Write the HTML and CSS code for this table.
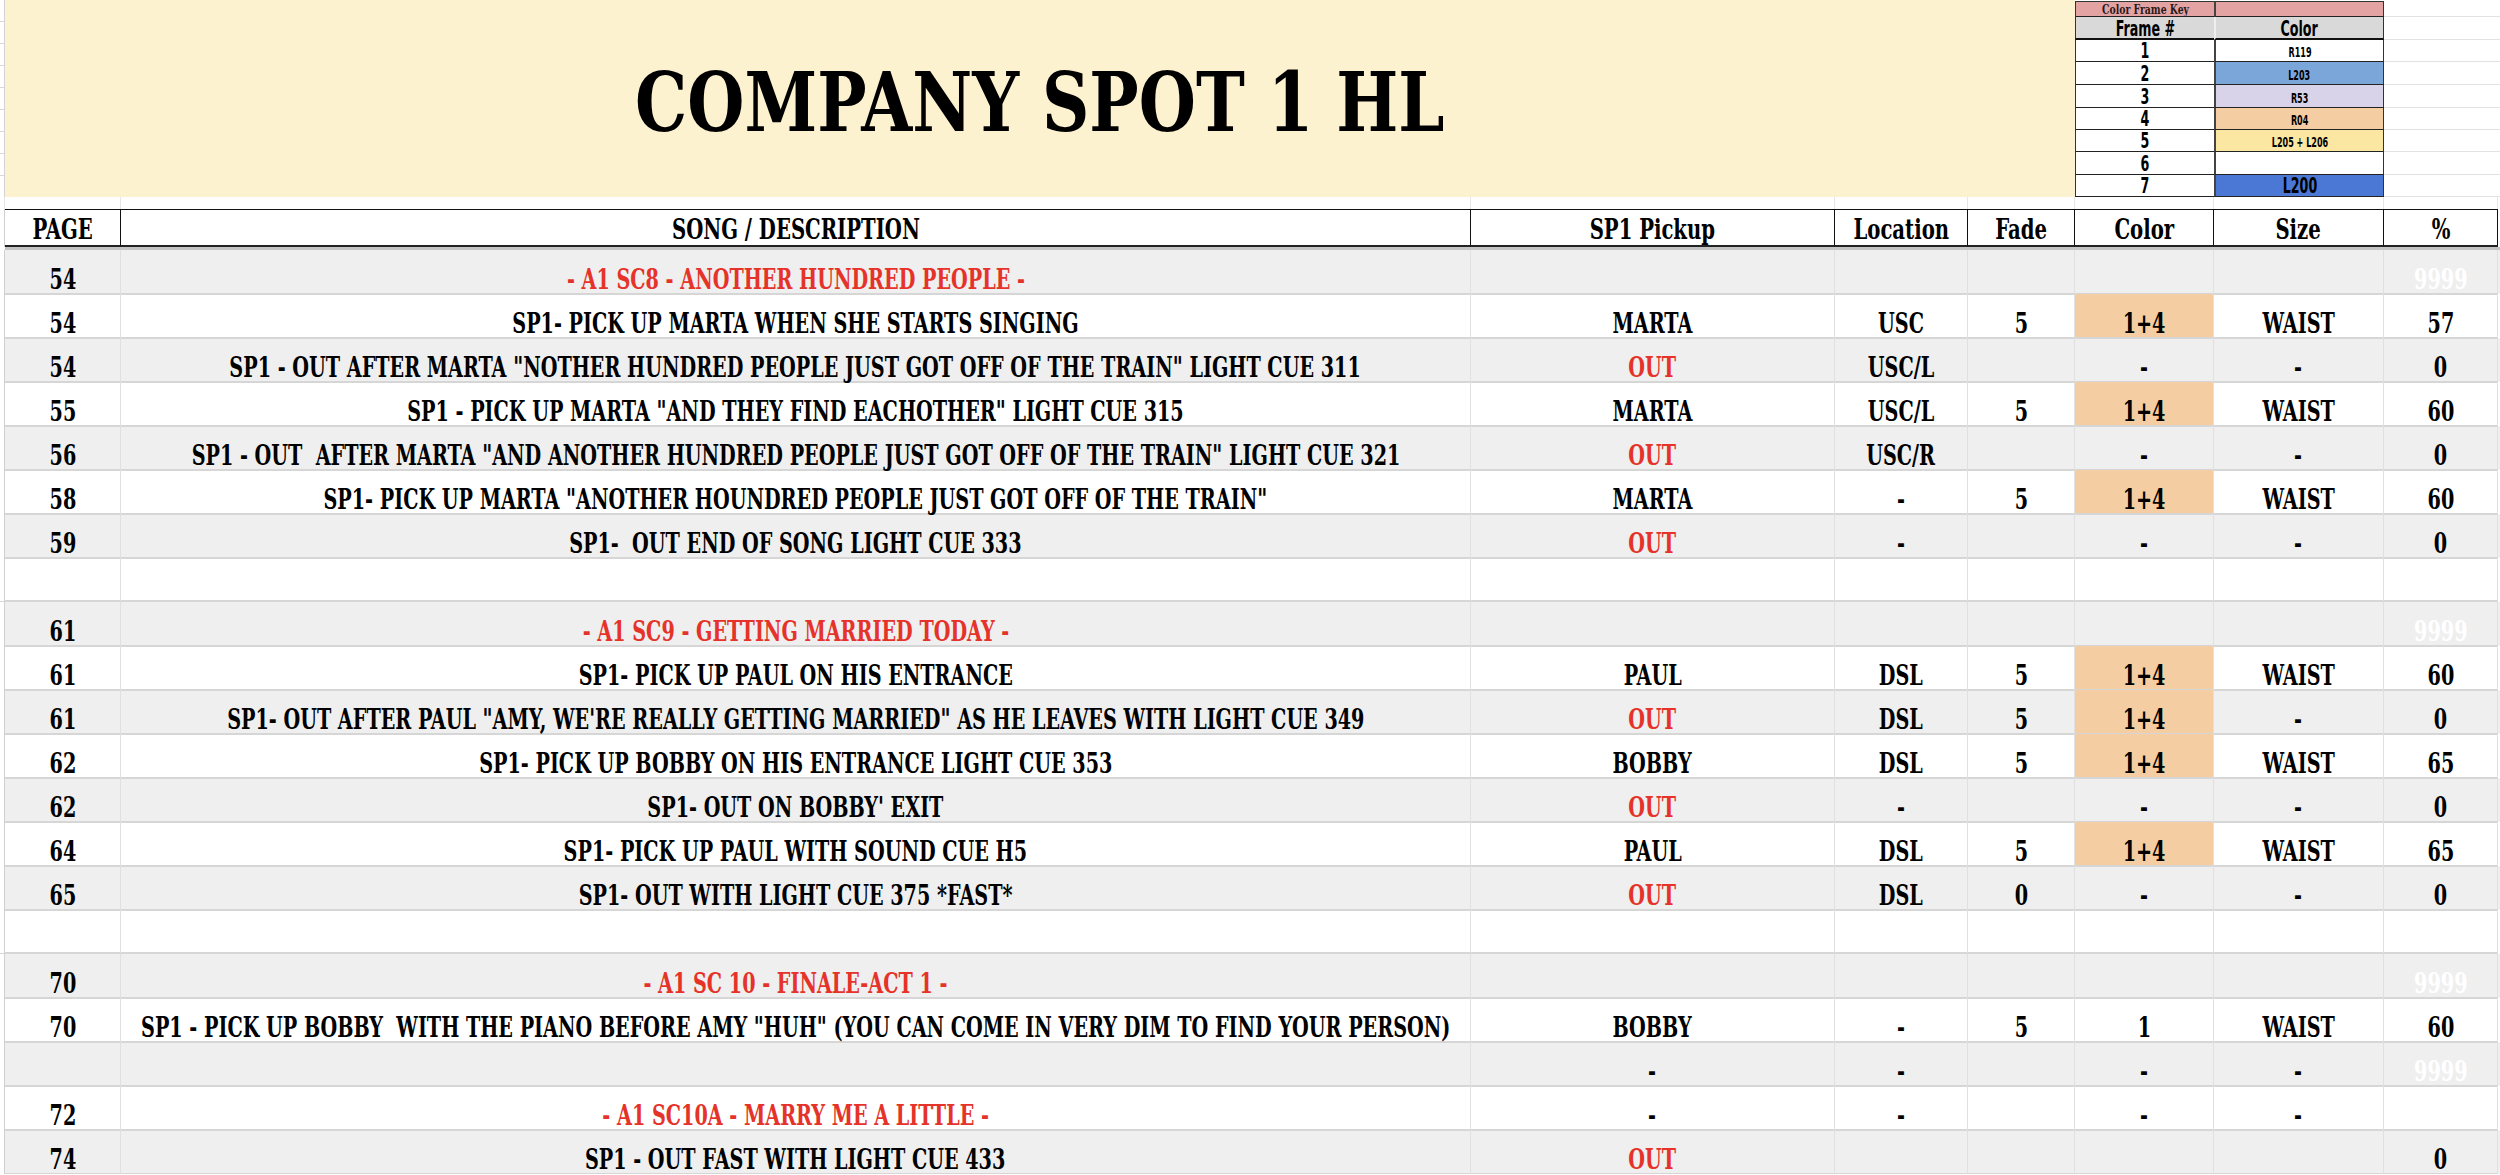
FILE: index.html
```html
<!DOCTYPE html>
<html>
<head>
<meta charset="utf-8">
<link rel="stylesheet" href="styles.css">
</head>
<body>
<div class="sheet">
  <div class="top">
    <div class="gutter"></div>
    <div class="title-cell"><h1 class="title">COMPANY SPOT 1 HL</h1></div>
    <div class="key">
      <div class="k k-title"><span class="kl">Color Frame Key</span></div><div class="k k-title"></div>
      <div class="k k-head"><span class="kt">Frame #</span></div><div class="k k-head"><span class="kt">Color</span></div>
      <div class="k k-num"><span class="kt">1</span></div><div class="k k-val"><span class="kt">R119</span></div>
      <div class="k k-num"><span class="kt">2</span></div><div class="k k-val c-l203"><span class="kt">L203</span></div>
      <div class="k k-num"><span class="kt">3</span></div><div class="k k-val c-r53"><span class="kt">R53</span></div>
      <div class="k k-num"><span class="kt">4</span></div><div class="k k-val c-r04"><span class="kt">R04</span></div>
      <div class="k k-num"><span class="kt">5</span></div><div class="k k-val c-l205"><span class="kt">L205 + L206</span></div>
      <div class="k k-num"><span class="kt">6</span></div><div class="k k-val"></div>
      <div class="k k-num"><span class="kt">7</span></div><div class="k k-val k-big c-l200"><span class="kt">L200</span></div>
    </div>
    <div class="filler">
      <div class="f"></div><div class="f"></div><div class="f"></div><div class="f"></div><div class="f"></div><div class="f"></div><div class="f"></div><div class="f"></div><div class="f"></div>
    </div>
  </div>
  <div class="row strip"><div></div><div></div><div></div><div></div><div></div><div></div><div></div><div></div><div></div></div>

  <div class="row head">
    <div></div><div><span class="t">PAGE</span></div><div><span class="t">SONG / DESCRIPTION</span></div><div><span class="t">SP1 Pickup</span></div><div><span class="t">Location</span></div><div><span class="t">Fade</span></div><div><span class="t">Color</span></div><div><span class="t">Size</span></div><div><span class="t">%</span></div>
  </div>
  <div class="freeze"></div>

  <div class="row gray"><div></div><div><span class="t">54</span></div><div class="red"><span class="t">- A1 SC8 - ANOTHER HUNDRED PEOPLE -</span></div><div></div><div></div><div></div><div></div><div></div><div class="white"><span class="t">9999</span></div></div>
  <div class="row"><div></div><div><span class="t">54</span></div><div><span class="t">SP1- PICK UP MARTA WHEN SHE STARTS SINGING</span></div><div><span class="t">MARTA</span></div><div><span class="t">USC</span></div><div><span class="t">5</span></div><div class="orange"><span class="t">1+4</span></div><div><span class="t">WAIST</span></div><div><span class="t">57</span></div></div>
  <div class="row gray"><div></div><div><span class="t">54</span></div><div><span class="t">SP1 - OUT AFTER MARTA "NOTHER HUNDRED PEOPLE JUST GOT OFF OF THE TRAIN" LIGHT CUE 311</span></div><div class="red"><span class="t">OUT</span></div><div><span class="t">USC/L</span></div><div></div><div><span class="t">-</span></div><div><span class="t">-</span></div><div><span class="t">0</span></div></div>
  <div class="row"><div></div><div><span class="t">55</span></div><div><span class="t">SP1 - PICK UP MARTA "AND THEY FIND EACHOTHER" LIGHT CUE 315</span></div><div><span class="t">MARTA</span></div><div><span class="t">USC/L</span></div><div><span class="t">5</span></div><div class="orange"><span class="t">1+4</span></div><div><span class="t">WAIST</span></div><div><span class="t">60</span></div></div>
  <div class="row gray"><div></div><div><span class="t">56</span></div><div><span class="t">SP1 - OUT&nbsp; AFTER MARTA "AND ANOTHER HUNDRED PEOPLE JUST GOT OFF OF THE TRAIN" LIGHT CUE 321</span></div><div class="red"><span class="t">OUT</span></div><div><span class="t">USC/R</span></div><div></div><div><span class="t">-</span></div><div><span class="t">-</span></div><div><span class="t">0</span></div></div>
  <div class="row"><div></div><div><span class="t">58</span></div><div><span class="t">SP1- PICK UP MARTA "ANOTHER HOUNDRED PEOPLE JUST GOT OFF OF THE TRAIN"</span></div><div><span class="t">MARTA</span></div><div><span class="t">-</span></div><div><span class="t">5</span></div><div class="orange"><span class="t">1+4</span></div><div><span class="t">WAIST</span></div><div><span class="t">60</span></div></div>
  <div class="row gray"><div></div><div><span class="t">59</span></div><div><span class="t">SP1-&nbsp; OUT END OF SONG LIGHT CUE 333</span></div><div class="red"><span class="t">OUT</span></div><div><span class="t">-</span></div><div></div><div><span class="t">-</span></div><div><span class="t">-</span></div><div><span class="t">0</span></div></div>
  <div class="row"><div></div><div></div><div></div><div></div><div></div><div></div><div></div><div></div><div></div></div>
  <div class="row gray"><div></div><div><span class="t">61</span></div><div class="red"><span class="t">- A1 SC9 - GETTING MARRIED TODAY -</span></div><div></div><div></div><div></div><div></div><div></div><div class="white"><span class="t">9999</span></div></div>
  <div class="row"><div></div><div><span class="t">61</span></div><div><span class="t">SP1- PICK UP PAUL ON HIS ENTRANCE</span></div><div><span class="t">PAUL</span></div><div><span class="t">DSL</span></div><div><span class="t">5</span></div><div class="orange"><span class="t">1+4</span></div><div><span class="t">WAIST</span></div><div><span class="t">60</span></div></div>
  <div class="row gray"><div></div><div><span class="t">61</span></div><div><span class="t">SP1- OUT AFTER PAUL "AMY, WE'RE REALLY GETTING MARRIED" AS HE LEAVES WITH LIGHT CUE 349</span></div><div class="red"><span class="t">OUT</span></div><div><span class="t">DSL</span></div><div><span class="t">5</span></div><div class="orange"><span class="t">1+4</span></div><div><span class="t">-</span></div><div><span class="t">0</span></div></div>
  <div class="row"><div></div><div><span class="t">62</span></div><div><span class="t">SP1- PICK UP BOBBY ON HIS ENTRANCE LIGHT CUE 353</span></div><div><span class="t">BOBBY</span></div><div><span class="t">DSL</span></div><div><span class="t">5</span></div><div class="orange"><span class="t">1+4</span></div><div><span class="t">WAIST</span></div><div><span class="t">65</span></div></div>
  <div class="row gray"><div></div><div><span class="t">62</span></div><div><span class="t">SP1- OUT ON BOBBY' EXIT</span></div><div class="red"><span class="t">OUT</span></div><div><span class="t">-</span></div><div></div><div><span class="t">-</span></div><div><span class="t">-</span></div><div><span class="t">0</span></div></div>
  <div class="row"><div></div><div><span class="t">64</span></div><div><span class="t">SP1- PICK UP PAUL WITH SOUND CUE H5</span></div><div><span class="t">PAUL</span></div><div><span class="t">DSL</span></div><div><span class="t">5</span></div><div class="orange"><span class="t">1+4</span></div><div><span class="t">WAIST</span></div><div><span class="t">65</span></div></div>
  <div class="row gray"><div></div><div><span class="t">65</span></div><div><span class="t">SP1- OUT WITH LIGHT CUE 375 *FAST*</span></div><div class="red"><span class="t">OUT</span></div><div><span class="t">DSL</span></div><div><span class="t">0</span></div><div><span class="t">-</span></div><div><span class="t">-</span></div><div><span class="t">0</span></div></div>
  <div class="row"><div></div><div></div><div></div><div></div><div></div><div></div><div></div><div></div><div></div></div>
  <div class="row gray"><div></div><div><span class="t">70</span></div><div class="red"><span class="t">- A1 SC 10 - FINALE-ACT 1 -</span></div><div></div><div></div><div></div><div></div><div></div><div class="white"><span class="t">9999</span></div></div>
  <div class="row"><div></div><div><span class="t">70</span></div><div><span class="t">SP1 - PICK UP BOBBY&nbsp; WITH THE PIANO BEFORE AMY "HUH" (YOU CAN COME IN VERY DIM TO FIND YOUR PERSON)</span></div><div><span class="t">BOBBY</span></div><div><span class="t">-</span></div><div><span class="t">5</span></div><div><span class="t">1</span></div><div><span class="t">WAIST</span></div><div><span class="t">60</span></div></div>
  <div class="row gray"><div></div><div></div><div></div><div><span class="t">-</span></div><div><span class="t">-</span></div><div></div><div><span class="t">-</span></div><div><span class="t">-</span></div><div class="white"><span class="t">9999</span></div></div>
  <div class="row"><div></div><div><span class="t">72</span></div><div class="red"><span class="t">- A1 SC10A - MARRY ME A LITTLE -</span></div><div><span class="t">-</span></div><div><span class="t">-</span></div><div></div><div><span class="t">-</span></div><div><span class="t">-</span></div><div></div></div>
  <div class="row gray"><div></div><div><span class="t">74</span></div><div><span class="t">SP1 - OUT FAST WITH LIGHT CUE 433</span></div><div class="red"><span class="t">OUT</span></div><div></div><div></div><div></div><div></div><div><span class="t">0</span></div></div>
</div>
</body>
</html>
```

FILE: styles.css
```css
html, body {
  margin: 0;
  padding: 0;
  background: #ffffff;
}

body {
  font-family: "DejaVu Serif", "Liberation Serif", serif;
  color: #000;
  overflow: hidden;
}

.sheet {
  width: 2500px;
}

/* ---------- top area ---------- */
.top {
  display: flex;
  height: 197px;
}

.gutter {
  width: 5px;
  flex: none;
  box-sizing: border-box;
  border-right: 1px solid #d3d3d3;
  background: repeating-linear-gradient(to bottom, #ffffff 0 21px, #d8d8d8 21px 22px);
}

.title-cell {
  width: 2070px;
  flex: none;
  background: #fdf2d0;
  display: flex;
  align-items: center;
  justify-content: center;
  box-sizing: border-box;
  padding-top: 6px;
}

.title {
  margin: 0;
  display: inline-block;
  font-family: "DejaVu Serif", serif;
  font-stretch: condensed;
  font-weight: bold;
  font-size: 82px;
  line-height: 1;
  white-space: nowrap;
  transform: scaleX(0.89);
}

.key {
  width: 309px;
  flex: none;
  display: grid;
  grid-template-columns: 139px 170px;
  grid-template-rows: 16px 23px 22px 23px 23px 22px 22px 23px 22px;
  box-sizing: border-box;
  padding-top: 1px;
  background: #fff;
}

.k {
  box-sizing: border-box;
  border-left: 1px solid #333;
  border-bottom: 1px solid #222;
  display: flex;
  align-items: center;
  justify-content: center;
  font-family: "DejaVu Sans", sans-serif;
  font-stretch: condensed;
  font-weight: bold;
  line-height: 1;
  white-space: nowrap;
}

.key > .k:nth-child(2n) {
  border-left: 2px solid #444;
  border-right: 1px solid #333;
}

.kt {
  display: inline-block;
  transform: scaleX(0.64);
}

.kl {
  display: inline-block;
  transform: scaleX(0.86);
}

.k-title {
  background: #e3a3a3;
  font-family: "DejaVu Serif", serif;
  font-size: 12px;
  border-top: 1px solid #333;
  color: #2a1a1a;
  padding-top: 1px;
}

.k-head {
  background: #d9d9d9;
  font-size: 22px;
  border-bottom: 2px solid #111;
  padding-top: 2px;
}

.key > .k-head:nth-child(2n) {
  border-left: 2px solid #eee;
}

.k-num {
  font-size: 22px;
  background: #fff;
  padding-top: 1px;
}

.k-val {
  font-size: 14px;
  background: #fff;
  padding-top: 3px;
}

.k-big {
  font-size: 22px;
  padding-top: 1px;
}

.c-l203 { background: #7ba6da; }
.c-r53 { background: #d9d3e9; }
.c-r04 { background: #f5cda2; }
.c-l205 { background: #fbe6a2; }
.c-l200 { background: #4a78d4; }

.filler {
  flex: 1;
  display: grid;
  grid-template-rows: 17px 23px 22px 23px 23px 22px 22px 23px 22px;
}

.f {
  border-bottom: 1px solid #e2e2e2;
}

/* ---------- grid rows ---------- */
.row {
  display: grid;
  grid-template-columns: 5px 116px 1350px 364px 133px 107px 139px 170px 114px;
  height: 44px;
  background: #ffffff;
}

.row.gray {
  background: #efefef;
}

.row > div {
  box-sizing: border-box;
  border-right: 1px solid #e0e0e0;
  border-bottom: 2px solid #d6d6d6;
  display: flex;
  align-items: center;
  justify-content: center;
  padding-top: 16px;
  font-family: "DejaVu Serif", serif;
  font-stretch: condensed;
  font-weight: bold;
  font-size: 27px;
  line-height: 1;
  white-space: nowrap;
}

.t {
  display: inline-block;
  flex: none;
  transform: scaleX(0.79);
}

.row > div:first-child {
  background: #ffffff;
  border-right: 1px solid #d0d0d0;
  border-bottom: 1px solid #d8d8d8;
}

.row.strip {
  height: 12px;
}

.row.strip > div {
  border-bottom: none;
  border-right: 1px solid #e6e6e6;
  padding: 0;
}

.row.head {
  height: 38px;
  background: #ffffff;
}

.row.head > div {
  border-top: 1px solid #111;
  border-right: 1px solid #111;
  border-bottom: 2px solid #222;
  padding-top: 5px;
  font-size: 28px;
}

.row.head .t {
  transform: scaleX(0.78);
}

.row.head > div:first-child {
  border-top: none;
  border-bottom: none;
  border-right: 1px solid #d0d0d0;
}

.freeze {
  height: 3px;
  margin-left: 5px;
  background: #c4c4c4;
}

.red {
  color: #e5332a;
}

.white {
  color: #ffffff;
}

.orange {
  background: #f5cda2;
}
```
